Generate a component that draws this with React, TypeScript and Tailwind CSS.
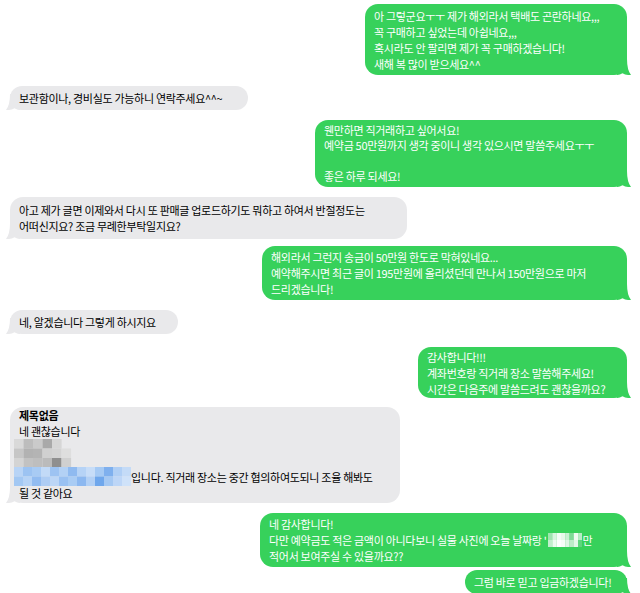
import React from 'react';

const GREEN = '#37d15b';
const GRAY = '#e9e9eb';

type Side = 'me' | 'them';

interface BubbleProps {
  side: Side;
  w: string;
  h: string;
  mt: string;
  leading?: string;
  children: React.ReactNode;
}

const Tail = ({ side }: { side: Side }) => {
  if (side === 'me') {
    return (
      <svg
        className="absolute bottom-0 right-[-4px]"
        width="14"
        height="16"
        viewBox="0 0 14 16"
      >
        <path d="M0 0 H10 Q10 11 14 16 Q9 16.4 5.5 14.2 Q3 16 0 16 Z" fill={GREEN} />
      </svg>
    );
  }
  return (
    <svg
      className="absolute bottom-0 left-[-4px]"
      width="14"
      height="16"
      viewBox="0 0 14 16"
    >
      <path d="M14 0 H4 Q4 11 0 16 Q5 16.4 8.5 14.2 Q11 16 14 16 Z" fill={GRAY} />
    </svg>
  );
};

const Bubble = ({ side, w, h, mt, leading = 'leading-[16px]', children }: BubbleProps) => {
  const me = side === 'me';
  return (
    <div className={`flex ${me ? 'justify-end pr-[13px]' : 'justify-start pl-[10px]'} ${mt}`}>
      <div
        className={`relative flex flex-col justify-center rounded-[13px] px-[9px] ${w} ${h} ${leading} ${
          me ? 'bg-[#37d15b] text-white' : 'bg-[#e9e9eb] text-black'
        }`}
      >
        <Tail side={side} />
        <div className="relative whitespace-nowrap">{children}</div>
      </div>
    </div>
  );
};

// blurred (pixelated) part of the grey message
const GrayMosaic = () => {
  const gray = [
    ['#d9d9d9', '#bdbdbd', '#cacaca', '#a9a9a9', '#d6d6d6', '#ffffff00'],
    ['#c6c6c6', '#b2b2b2', '#b4b4b4', '#d0d0d0', '#d3d3d3', '#dedede'],
    ['#d4d4d4', '#c2c2c2', '#bebebe', '#bbbbbb', '#8f8f8f', '#d0d0d0'],
  ];
  const blue = [
    ['#b8d4f6', '#9cc3f2', '#a8cbf4', '#c2daf7', '#9dc3f2', '#b3d1f5', '#8fbaf0', '#b6d3f6', '#c7ddf8', '#a6caf4', '#7fb0ee', '#b0cff5', '#c4dbf7'],
    ['#a3c8f3', '#b6d3f6', '#92bcf1', '#aecdf4', '#bcd6f6', '#9ac1f2', '#a9ccf4', '#8cb8f0', '#b2d0f5', '#6fa7ec', '#a4c8f3', '#bdd6f7', '#cfe2f9'],
  ];
  return (
    <svg width="117" height="47" className="ml-[-5px] shrink-0">
      {gray.map((row, r) =>
        row.map((c, i) => (
          <rect key={`g${r}-${i}`} x={i * 9.5} y={r * 9.5} width="9.6" height="9.6" fill={c} />
        ))
      )}
      {blue.map((row, r) =>
        row.map((c, i) => (
          <rect key={`b${r}-${i}`} x={i * 9} y={28 + r * 9.5} width="9.1" height="9.6" fill={c} />
        ))
      )}
    </svg>
  );
};

const GreenMosaic = () => {
  const cells = [
    ['#9fe4b0', '#d9f5df', '#f4fcf6', '#e6f9ea', '#c8f0d2', '#7fdb97', '#f0fbf2', '#b8ecc5'],
    ['#c2eecd', '#eefbf1', '#ffffff', '#f6fdf8', '#def6e4', '#bdebc8', '#e3f7e8', '#5fd47e'],
  ];
  return (
    <svg width="34" height="14" className="inline-block align-[-2px] mx-[1px]">
      {cells.map((row, r) =>
        row.map((c, i) => (
          <rect key={`${r}-${i}`} x={i * 4.3} y={r * 7} width="4.4" height="7.1" fill={c} />
        ))
      )}
    </svg>
  );
};

export default function App() {
  return (
    <div
      className="min-h-[593px] w-[640px] overflow-hidden bg-white pt-[4px] text-[11px] tracking-[-0.3px]"
      style={{ fontFamily: '"Noto Sans CJK KR", "Noto Sans", sans-serif' }}
    >
      <Bubble side="me" w="w-[262px]" h="h-[71px]" mt="mt-0">
        아 그렇군요ㅜㅜ 제가 해외라서 택배도 곤란하네요,,,
        <br />꼭 구매하고 싶었는데 아쉽네요,,,
        <br />
        혹시라도 안 팔리면 제가 꼭 구매하겠습니다!
        <br />
        새해 복 많이 받으세요^^
      </Bubble>

      <Bubble side="them" w="w-[238px]" h="h-[24px]" mt="mt-[11px]">
        보관함이나, 경비실도 가능하니 연락주세요^^~
      </Bubble>

      <Bubble side="me" w="w-[312px]" h="h-[67px]" mt="mt-[10px]" leading="leading-[15.5px]">
        웬만하면 직거래하고 싶어서요!
        <br />
        예약금 50만원까지 생각 중이니 생각 있으시면 말씀주세요ㅜㅜ
        <br />
        <br />
        좋은 하루 되세요!
      </Bubble>

      <Bubble side="them" w="w-[397px]" h="h-[42px]" mt="mt-[10px]">
        아고 제가 글면 이제와서 다시 또 판매글 업로드하기도 뭐하고 하여서 반절정도는
        <br />
        어떠신지요? 조금 무례한부탁일지요?
      </Bubble>

      <Bubble side="me" w="w-[365px]" h="h-[54px]" mt="mt-[7px]">
        해외라서 그런지 송금이 50만원 한도로 막혀있네요...
        <br />
        예약해주시면 최근 글이 195만원에 올리셨던데 만나서 150만원으로 마저
        <br />
        드리겠습니다!
      </Bubble>

      <Bubble side="them" w="w-[168px]" h="h-[24px]" mt="mt-[10px]">
        네, 알겠습니다 그렇게 하시지요
      </Bubble>

      <Bubble side="me" w="w-[209px]" h="h-[51px]" mt="mt-[13px]">
        감사합니다!!!
        <br />
        계좌번호랑 직거래 장소 말씀해주세요!
        <br />
        시간은 다음주에 말씀드려도 괜찮을까요?
      </Bubble>

      <Bubble side="them" w="w-[390px]" h="h-[96px]" mt="mt-[9px]" leading="leading-[15.5px]">
        <div className="font-bold">제목없음</div>
        <div>네 괜찮습니다</div>
        <div className="flex items-end">
          <GrayMosaic />
          <span className="pb-[1px]">입니다. 직거래 장소는 중간 협의하여도되니 조율 해봐도</span>
        </div>
        <div>될 것 같아요</div>
      </Bubble>

      <Bubble side="me" w="w-[367px]" h="h-[54px]" mt="mt-[10px]">
        네 감사합니다!
        <br />
        다만 예약금도 적은 금액이 아니다보니 실물 사진에 오늘 날짜랑 '
        <GreenMosaic />만
        <br />
        적어서 보여주실 수 있을까요??
      </Bubble>

      <Bubble side="me" w="w-[162px]" h="h-[24px]" mt="mt-[3px]">
        그럼 바로 믿고 입금하겠습니다!
      </Bubble>
    </div>
  );
}
